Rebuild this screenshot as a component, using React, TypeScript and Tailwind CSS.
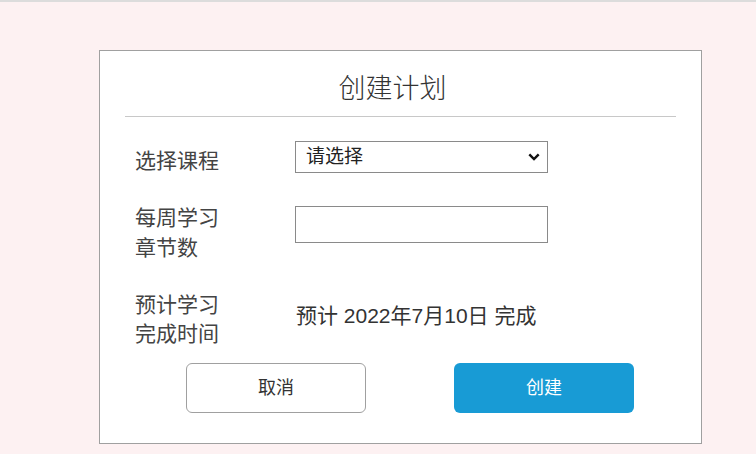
import React from 'react';

const font = { fontFamily: '"Liberation Sans", "Noto Sans CJK SC", sans-serif' };

const App = () => {
  return (
    <div className="w-[756px] h-[454px] bg-[#fdf1f2] border-t-2 border-[#dcdcdc] overflow-hidden" style={font}>
      <div className="ml-[99px] mt-[48px] w-[603px] h-[394px] bg-white border border-[#a0a0a0] flex flex-col">
        <h2 className="mt-[18px] h-[40px] leading-[40px] pr-[16px] text-center text-[27px] font-light text-[#333]">创建计划</h2>
        <div className="mt-[7px] mx-[25px] h-px bg-[#c8c8c8]" />

        <div className="mt-[24px] ml-[35px] flex items-start">
          <span className="w-[160px] mt-[5px] text-[21px] leading-[30px] text-[#444]">选择课程</span>
          <div className="relative w-[253px] h-[32px]">
            <select className="appearance-none w-full h-full border border-[#8a8a8a] bg-white pl-[10px] text-[19px] text-[#222] outline-none">
              <option>请选择</option>
            </select>
            <svg className="absolute right-[8px] top-[12px] pointer-events-none" width="12" height="8" viewBox="0 0 12 8">
              <path d="M1.3 1.3 L6 6 L10.7 1.3" fill="none" stroke="#111" strokeWidth="2.4" />
            </svg>
          </div>
        </div>

        <div className="mt-[27px] ml-[35px] flex items-start">
          <span className="w-[160px] text-[21px] leading-[30px] text-[#444]">每周学习<br />章节数</span>
          <input type="text" className="mt-[3px] w-[253px] h-[37px] border border-[#8a8a8a] bg-white outline-none" />
        </div>

        <div className="mt-[27px] ml-[35px] flex items-start">
          <span className="w-[161px] text-[21px] leading-[29px] text-[#444]">预计学习<br />完成时间</span>
          <span className="mt-[11px] text-[21px] leading-[30px] text-[#333]">预计 2022年7月10日 完成</span>
        </div>

        <div className="mt-[15px] ml-[86px] flex gap-[88px]">
          <button type="button" className="w-[180px] h-[50px] rounded-[6px] border border-[#a0a0a0] bg-white text-[18px] text-[#333]">取消</button>
          <button type="button" className="w-[180px] h-[50px] rounded-[6px] bg-[#189bd5] text-[18px] text-white">创建</button>
        </div>
      </div>
    </div>
  );
};

export default App;
